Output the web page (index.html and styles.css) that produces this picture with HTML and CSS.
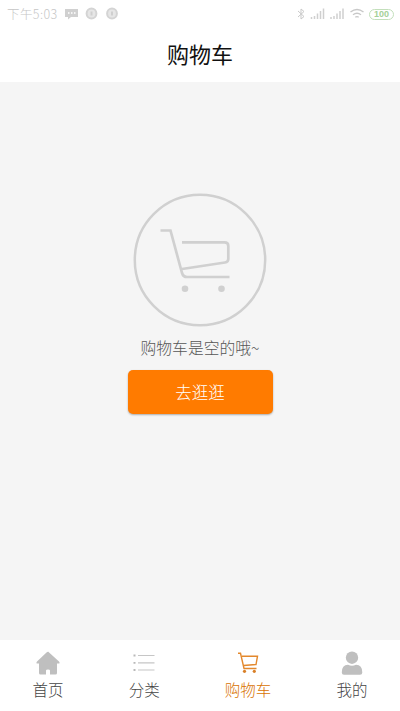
FILE: index.html
```html
<!DOCTYPE html>
<html lang="zh-CN">
<head>
<meta charset="utf-8">
<title>购物车</title>
<link rel="stylesheet" href="styles.css">
</head>
<body>
<div class="status">
  <span class="time">下午5:03</span>
  <svg class="notices" width="56" height="14" viewBox="0 0 56 14">
    <path d="M1 2h13v8H7l-3 2.500v-2.500H1z" fill="#d0d0d0"/>
    <path d="M4 6h1.500M7 6h1.500M10 6h1.500" stroke="#fff" stroke-width="1.500"/>
    <g fill="#e6e6e6" stroke="#d4d4d4" stroke-width="2"><circle cx="27.500" cy="6.500" r="4.900"/><circle cx="48" cy="6.500" r="4.900"/></g>
    <path d="M27.500 4.500v4M48 4.500v4" stroke="#cfcfcf" stroke-width="2"/>
  </svg>
  <svg class="signals" width="68" height="14" viewBox="0 0 68 14">
    <path d="M1 4l6 5.500-3 2.500V2l3 2.500L1 10" fill="none" stroke="#c9c9c9"/>
    <path d="M14.500 12v-2M17.500 12V9M20.500 12V6.500M23.500 12V4M26.500 12V1.500M34 12v-2M37 12V9M40 12V6.500M43 12V4M46 12V1.500" stroke="#cfcfcf" stroke-width="1.500"/>
    <path d="M53.500 5q6.500-5 13 0M56 7.800q4-3 8 0M58.300 10.300q1.700-1.300 3.400 0" fill="none" stroke="#c8c8c8" stroke-width="1.400"/>
  </svg>
  <span class="battery">100</span>
</div>
<header class="title">购物车</header>
<main class="empty">
  <svg class="cart" width="134" height="134" viewBox="0 0 134 134" fill="none" stroke="#d0d0d0">
    <circle cx="67" cy="67" r="65.200" stroke-width="2.500"/>
    <path d="M27.500 37.500H37.500L49 80q1.200 4 5 4H96.500M49 49.300H91.500Q95.300 49.300 95.300 53V66Q95.300 69 92 69.500L49 76" stroke-width="2.700"/>
    <g fill="#d0d0d0" stroke="none"><circle cx="52" cy="95.700" r="3.300"/><circle cx="88.500" cy="95.700" r="3.300"/></g>
  </svg>
  <p class="message">购物车是空的哦~</p>
  <button class="browse" type="button">去逛逛</button>
</main>
<nav class="tabs">
  <a class="tab">
    <svg width="26" height="26" viewBox="0 0 26 26"><path d="M13 1.500 24 11.500Q25.500 13.500 23.500 13.500H22V23Q22 24.500 20.500 24.500H15V20.500Q15 19.500 13 19.500T11 20.500V24.500H5.500Q4 24.500 4 23V13.500H2.500Q.5 13.500 2 11.500L11.500 2.500Q13 1.200 14.500 2.500Z" fill="#bfbfbf"/></svg>
    <span>首页</span>
  </a>
  <a class="tab">
    <svg width="26" height="26" viewBox="0 0 26 26" stroke="#c6c6c6" stroke-width="1.200"><path d="M7 5.500H23.500M7 12.800H23.500M7 20H23.500"/><path d="M2.500 5.500h2M2.500 12.800h2M2.500 20h2" stroke="#b9b9b9" stroke-width="1.800"/></svg>
    <span>分类</span>
  </a>
  <a class="tab active">
    <svg width="26" height="26" viewBox="0 0 26 26" fill="none" stroke="#e3882c" stroke-width="1.400"><path d="M3 3.300H5.500L9 18.500H21.500M7 6.200H22.500L21 14.500L8.500 15.500"/><g fill="#d98028" stroke="none"><circle cx="9.500" cy="21.300" r="1.600"/><circle cx="19.300" cy="21.300" r="1.600"/></g></svg>
    <span>购物车</span>
  </a>
  <a class="tab">
    <svg width="26" height="26" viewBox="0 0 26 26" fill="#bfbfbf"><circle cx="13" cy="7.700" r="6.200"/><path d="M2.800 22.500Q2.800 14.800 9 14.800Q13 16.500 17 14.800Q23.300 14.800 23.300 22.500Q23.300 24.800 21 24.800H5Q2.800 24.800 2.800 22.500Z"/></svg>
    <span>我的</span>
  </a>
</nav>
</body>
</html>
```
FILE: styles.css
```css
* { box-sizing: border-box; }
body {
  margin: 0;
  height: 711px;
  display: flex;
  flex-direction: column;
  background: #fff;
  font-family: "Noto Sans CJK SC", sans-serif;
  font-weight: 300;
}
.status {
  height: 28px;
  display: flex;
  align-items: center;
  padding: 0 6px 0 7px;
  color: #c6c6c6;
}
.time {
  font-size: 12.5px;
  line-height: 28px;
  letter-spacing: .4px;
}
.notices { margin-left: 6px; }
.signals { margin-left: auto; }
.battery {
  width: 25px;
  height: 11px;
  margin-left: 4px;
  border: 1px solid #c3dfbb;
  border-radius: 6px;
  color: #a5d198;
  font: bold 9px/9px "Liberation Sans", sans-serif;
  text-align: center;
}
.title {
  height: 54px;
  font-size: 22px;
  line-height: 51px;
  font-weight: 400;
  text-align: center;
  color: #111;
}
.empty {
  flex: 1;
  display: flex;
  flex-direction: column;
  align-items: center;
  padding-top: 111px;
  background: #f5f5f5;
}
.cart { flex: none; }
.message {
  margin: 9px 0 10px;
  font-size: 15.8px;
  line-height: 24px;
  color: #555;
}
.browse {
  width: 145px;
  height: 44px;
  padding: 0;
  border: 0;
  border-radius: 5px;
  background: #ff7b00;
  box-shadow: 0 1px 2px rgba(0, 0, 0, .3);
  color: #fff;
  font: inherit;
  font-size: 16.5px;
  line-height: 45px;
}
.tabs {
  height: 71px;
  display: flex;
  justify-content: space-around;
  padding-top: 10px;
}
.tab {
  display: flex;
  flex-direction: column;
  align-items: center;
  font-size: 15.5px;
  line-height: 26px;
  color: #444;
}
.active { color: #d87200; }
```
